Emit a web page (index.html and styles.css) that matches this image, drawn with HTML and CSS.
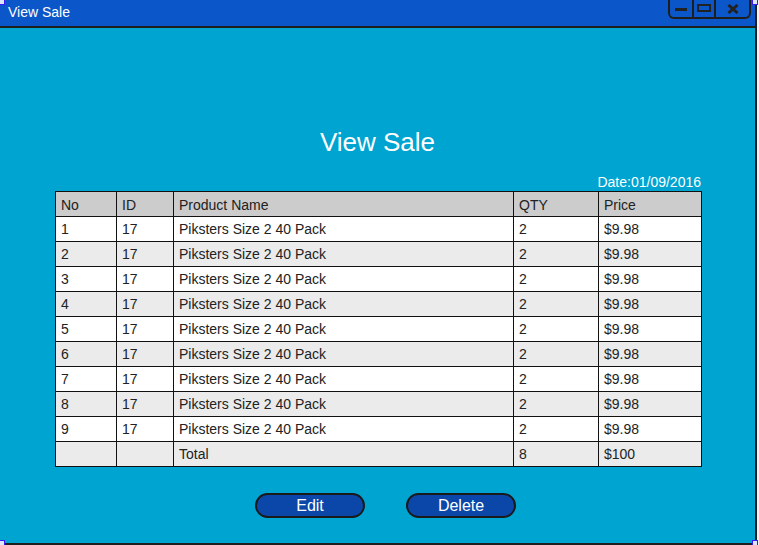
FILE: index.html
```html
<!DOCTYPE html>
<html>
<head>
<meta charset="utf-8">
<link rel="stylesheet" href="styles.css">
</head>
<body>
<div class="stage">
  <div class="window">
    <div class="titlebar">
      <span class="title">View Sale</span>
      <div class="controls">
        <div class="ctl c1"><svg width="14" height="6" viewBox="0 0 14 6"><rect x="1" y="2" width="12" height="3" fill="#222"/></svg></div>
        <div class="ctl c2"><svg width="14" height="9" viewBox="0 0 14 9"><rect x="1" y="1" width="12" height="6" fill="none" stroke="#222" stroke-width="2"/></svg></div>
        <div class="ctl c3"><svg width="12" height="10" viewBox="0 0 12 10"><path d="M1.5 1 L10.5 9 M10.5 1 L1.5 9" stroke="#222" stroke-width="3"/></svg></div>
      </div>
    </div>
    <div class="content">
      <h1 class="heading">View Sale</h1>
      <div class="sheet">
        <div class="date">Date:01/09/2016</div>
        <table class="grid">
          <thead>
            <tr><th class="c-no">No</th><th class="c-id">ID</th><th class="c-name">Product Name</th><th class="c-qty">QTY</th><th class="c-price">Price</th></tr>
          </thead>
          <tbody>
            <tr><td>1</td><td>17</td><td>Piksters Size 2 40 Pack</td><td>2</td><td>$9.98</td></tr>
            <tr><td>2</td><td>17</td><td>Piksters Size 2 40 Pack</td><td>2</td><td>$9.98</td></tr>
            <tr><td>3</td><td>17</td><td>Piksters Size 2 40 Pack</td><td>2</td><td>$9.98</td></tr>
            <tr><td>4</td><td>17</td><td>Piksters Size 2 40 Pack</td><td>2</td><td>$9.98</td></tr>
            <tr><td>5</td><td>17</td><td>Piksters Size 2 40 Pack</td><td>2</td><td>$9.98</td></tr>
            <tr><td>6</td><td>17</td><td>Piksters Size 2 40 Pack</td><td>2</td><td>$9.98</td></tr>
            <tr><td>7</td><td>17</td><td>Piksters Size 2 40 Pack</td><td>2</td><td>$9.98</td></tr>
            <tr><td>8</td><td>17</td><td>Piksters Size 2 40 Pack</td><td>2</td><td>$9.98</td></tr>
            <tr><td>9</td><td>17</td><td>Piksters Size 2 40 Pack</td><td>2</td><td>$9.98</td></tr>
            <tr class="total"><td></td><td></td><td>Total</td><td>8</td><td>$100</td></tr>
          </tbody>
        </table>
      </div>
      <div class="actions">
        <button class="btn">Edit</button>
        <button class="btn">Delete</button>
      </div>
    </div>
  </div>
  <span class="handle h-tl"></span>
  <span class="handle h-tr"></span>
  <span class="handle h-bl"></span>
  <span class="handle h-br"></span>
</div>
</body>
</html>
```
FILE: styles.css
```css
html, body {
  margin: 0;
  padding: 0;
  background: #eef3f9;
  font-family: "Liberation Sans", Arial, sans-serif;
}
.stage {
  position: relative;
  width: 759px;
  height: 545px;
}
.window {
  width: 755px;
  height: 543px;
  border-right: 2px solid #1e1e1e;
  border-bottom: 2px solid #1e1e1e;
  background: #00a4d1;
  display: flex;
  flex-direction: column;
}
.titlebar {
  height: 26px;
  background: #0b56c8;
  border-bottom: 2px solid #1e1e1e;
  display: flex;
  align-items: flex-start;
  justify-content: space-between;
  flex: none;
}
.title {
  color: #fff;
  font-size: 14px;
  line-height: 14px;
  margin: 5px 0 0 8px;
}
.controls {
  display: flex;
  height: 17px;
  margin-right: 4px;
  border: 2px solid #1e1e1e;
  border-top: none;
  border-radius: 0 0 6px 6px;
}
.ctl {
  display: flex;
  align-items: center;
  justify-content: center;
  border-left: 2px solid #1e1e1e;
}
.ctl.c1 { width: 22px; border-left: none; }
.ctl.c2 { width: 20px; }
.ctl.c3 { width: 33px; }
.content {
  flex: 1;
  display: flex;
  flex-direction: column;
  align-items: center;
}
.heading {
  margin: 99px 0 0 0;
  font-weight: normal;
  font-size: 26px;
  line-height: 30px;
  color: #fff;
}
.sheet {
  margin-top: 17px;
  width: 646px;
  margin-left: 1px;
  display: flex;
  flex-direction: column;
}
.date {
  align-self: flex-end;
  color: #fff;
  font-size: 14px;
  line-height: 16px;
  margin-bottom: 1px;
}
.grid {
  border-collapse: collapse;
  width: 647px;
  font-size: 14px;
  color: #222;
}
.grid th, .grid td {
  border: 1px solid #111;
  height: 24px;
  padding: 0 5px;
  text-align: left;
  font-weight: normal;
  line-height: 16px;
  background: #fff;
}
.grid th { background: #cccccc; height: 23px; padding-top: 1px; }
.grid tbody tr:nth-child(even) td { background: #ebebeb; }
.grid tr.total td { background: #ebebeb; }
.c-no { width: 50px; }
.c-id { width: 46px; }
.c-name { width: 329px; }
.c-qty { width: 74px; }
.c-price { width: 92px; }
.actions {
  margin-top: 26px;
  display: flex;
  gap: 41px;
  margin-left: 16px;
}
.btn {
  width: 110px;
  height: 25px;
  border: 2px solid #1a1a1a;
  border-radius: 13px;
  background: #0a47a8;
  color: #fff;
  font-family: "Liberation Sans", Arial, sans-serif;
  font-size: 16px;
  line-height: 18px;
  padding: 0;
}
.handle {
  position: absolute;
  width: 4px;
  height: 4px;
  background: #dde6f8;
  border: 1px solid #3a1cf0;
}
.h-tl { left: -1px; top: -1px; }
.h-tr { left: 752px; top: -1px; }
.h-bl { left: -1px; top: 540px; }
.h-br { left: 752px; top: 540px; }
```
